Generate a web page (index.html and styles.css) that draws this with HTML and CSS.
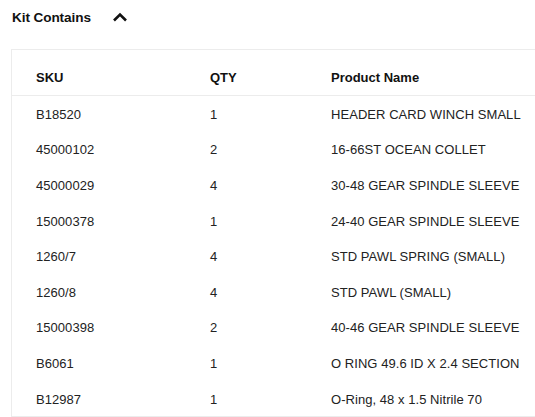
FILE: index.html
```html
<!DOCTYPE html>
<html>
<head>
<meta charset="utf-8">
<link rel="stylesheet" href="styles.css">
</head>
<body>
<div class="kit">
  <div class="kit-head">
    <span class="kit-title">Kit Contains</span>
    <svg class="chev" width="16" height="10" viewBox="0 0 16 10"><path d="M2 8.5 L8 2.5 L14 8.5" fill="none" stroke="#111" stroke-width="2.6"/></svg>
  </div>
  <div class="box">
    <table class="tbl">
      <thead>
        <tr><th class="c-sku">SKU</th><th class="c-qty">QTY</th><th class="c-name">Product Name</th></tr>
      </thead>
      <tbody>
        <tr><td>B18520</td><td>1</td><td>HEADER CARD WINCH SMALL</td></tr>
        <tr><td>45000102</td><td>2</td><td>16-66ST OCEAN COLLET</td></tr>
        <tr><td>45000029</td><td>4</td><td>30-48 GEAR SPINDLE SLEEVE</td></tr>
        <tr><td>15000378</td><td>1</td><td>24-40 GEAR SPINDLE SLEEVE</td></tr>
        <tr><td>1260/7</td><td>4</td><td>STD PAWL SPRING (SMALL)</td></tr>
        <tr><td>1260/8</td><td>4</td><td>STD PAWL (SMALL)</td></tr>
        <tr><td>15000398</td><td>2</td><td>40-46 GEAR SPINDLE SLEEVE</td></tr>
        <tr><td>B6061</td><td>1</td><td>O RING 49.6 ID X 2.4 SECTION</td></tr>
        <tr class="last"><td>B12987</td><td>1</td><td>O-Ring, 48 x 1.5 Nitrile 70</td></tr>
      </tbody>
    </table>
  </div>
</div>
</body>
</html>
```
FILE: styles.css
```css
html, body { margin: 0; padding: 0; background: #fff; }
body { font-family: "Liberation Sans", Arial, sans-serif; color: #1a1a1a; overflow: hidden; }
.kit { padding: 0 0 0 11px; }
.kit-head { display: flex; align-items: center; height: 35px; padding-left: 1px; }
.kit-title { font-size: 13.6px; font-weight: bold; color: #111; letter-spacing: -0.1px; }
.chev { margin-left: 21px; margin-top: -2px; }
.box { margin-top: 14px; border: 1px solid #ececec; border-right: none; }
.tbl { border-collapse: collapse; width: 100%; font-size: 13px; }
.tbl th { text-align: left; font-weight: bold; color: #111; height: 45px; padding: 10px 0 0; border-bottom: 1px solid #ececec; box-sizing: border-box; }
.tbl td { height: 35.6px; padding: 0; vertical-align: middle; color: #222; letter-spacing: 0.05px; }
.tbl tbody tr:first-child td { padding-top: 1px; }
.tbl tr.last td { height: 33px; padding-top: 2px; }
.c-sku, .tbl td:nth-child(1) { padding-left: 24px !important; width: 174px; }
.c-qty { width: 121px; }
```
